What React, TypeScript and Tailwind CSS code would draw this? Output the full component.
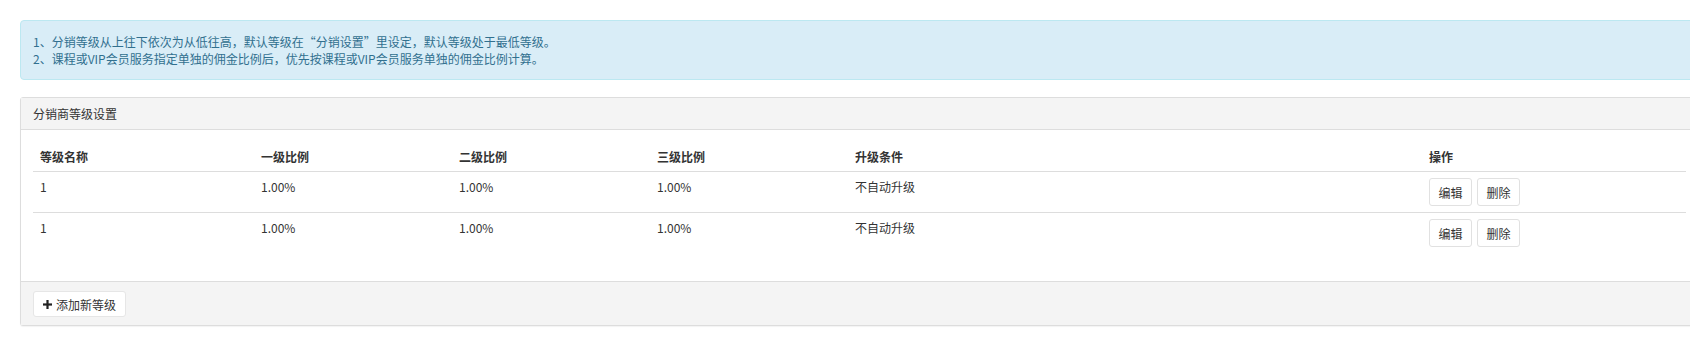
import React from 'react'

const font = { fontFamily: '"Noto Sans CJK SC", "Noto Sans", sans-serif' }

interface Level {
  id: number
  name: string
  first: string
  second: string
  third: string
  condition: string
}

const levels: Level[] = [
  { id: 1, name: '1', first: '1.00%', second: '1.00%', third: '1.00%', condition: '不自动升级' },
  { id: 2, name: '1', first: '1.00%', second: '1.00%', third: '1.00%', condition: '不自动升级' },
]

const cols = 'grid grid-cols-[220px_198px_198px_198px_574px_1fr]'

const SmallButton: React.FC<{ label: string }> = ({ label }) => (
  <button className="h-[28px] w-[43px] rounded-[3px] border border-[#e1e1e1] bg-white text-[12px] text-[#333]">
    {label}
  </button>
)

export default function App() {
  return (
    <div className="w-[1690px] h-[364px] overflow-hidden bg-white text-[12px] leading-[17px] text-[#333]" style={font}>
      <div className="ml-[20px] w-[1679px] pt-[20px]">
        <div className="rounded-[4px] border border-[#bce8f1] bg-[#d9edf7] px-[12px] py-[12px] text-[#31708f]">
          <p>1、分销等级从上往下依次为从低往高，默认等级在“分销设置”里设定，默认等级处于最低等级。</p>
          <p>2、课程或VIP会员服务指定单独的佣金比例后，优先按课程或VIP会员服务单独的佣金比例计算。</p>
        </div>

        <div className="mt-[17px] rounded-[3px] border border-[#dddddd] bg-white shadow-[0_1px_1px_rgba(0,0,0,0.05)]">
          <div className="border-b border-[#dddddd] bg-[#f4f4f4] px-[12px] py-[7px]">分销商等级设置</div>

          <div className="px-[12px] pt-[12px] pb-[27px]">
            <div className={`${cols} h-[30px] items-center border-b border-[#dddddd] font-bold`}>
              <div className="px-[7px]">等级名称</div>
              <div className="px-[8px]">一级比例</div>
              <div className="px-[8px]">二级比例</div>
              <div className="px-[8px]">三级比例</div>
              <div className="px-[8px]">升级条件</div>
              <div className="px-[8px]">操作</div>
            </div>
            {levels.map((item, i) => (
              <div
                key={item.id}
                className={`${cols} h-[41px] ${i < levels.length - 1 ? 'border-b border-[#dddddd]' : ''}`}
              >
                <div className="px-[7px] pt-[6px]">{item.name}</div>
                <div className="px-[8px] pt-[6px]">{item.first}</div>
                <div className="px-[8px] pt-[6px]">{item.second}</div>
                <div className="px-[8px] pt-[6px]">{item.third}</div>
                <div className="px-[8px] pt-[6px]">{item.condition}</div>
                <div className="flex gap-[5px] px-[8px] pt-[6px]">
                  <SmallButton label="编辑" />
                  <SmallButton label="删除" />
                </div>
              </div>
            ))}
          </div>

          <div className="border-t border-[#dddddd] bg-[#f4f4f4] px-[12px] pt-[9px] pb-[8px]">
            <button className="flex h-[26px] w-[93px] items-center justify-center gap-[4px] rounded-[3px] border border-[#e6e6e6] bg-white text-[12px] text-[#333]">
              <svg width="9" height="9" viewBox="0 0 9 9" fill="#222">
                <rect x="3.4" y="0" width="2.2" height="9" />
                <rect x="0" y="3.4" width="9" height="2.2" />
              </svg>
              添加新等级
            </button>
          </div>
        </div>
      </div>
    </div>
  )
}
